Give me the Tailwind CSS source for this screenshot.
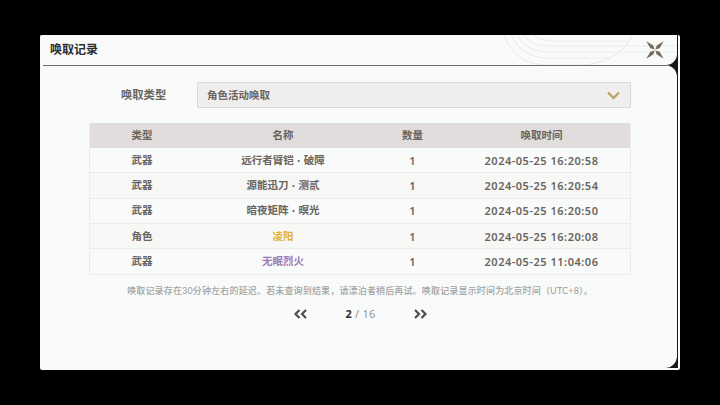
<!doctype html>
<html lang="zh-CN">

<head>
    <meta charset="utf-8">
    <meta name="viewport" content="width=device-width, initial-scale=1.0">
    <title>唤取记录</title>
    <script src="https://cdn.jsdelivr.net/npm/@tailwindcss/browser@4"></script>
</head>

<body class="bg-black w-[720px] h-[405px] overflow-hidden pt-[35px] pl-10 font-['Lato','Noto_Sans_CJK_SC',sans-serif] text-[#69645e]">
    <div class="w-[640px] h-[335px] bg-[#f9fbfa] rounded-[2px] pr-[2px] pb-[2px] overflow-hidden">
        <div class="flex flex-col h-full bg-[#15191b] pr-[1px]">

            <!-- Title bar -->
            <header class="relative h-[30px] shrink-0 bg-[#f9fbfa] rounded-br-[11px] flex items-center justify-between pl-[10px] pr-[13px] overflow-hidden">
                <svg class="absolute right-0 top-0" width="180" height="30" viewBox="0 0 180 30" fill="none" stroke="#ebedec" stroke-width="1.2">
                    <path d="M7 0C14 18 28 30 48 30H80C108 30 128 18 135 0" />
                    <path d="M14 0C21 14 32 23 50 23H112" />
                    <path d="M20 0C27 11 36 17 52 17H180" />
                    <path d="M27 0C33 8 40 11 54 11H180" />
                    <path d="M36 0C41 4 46 6 56 6H130" />
                </svg>
                <h1 class="relative text-[12px] leading-[30px] font-bold text-[#2c2e30]">唤取记录</h1>
                <button class="relative" aria-label="关闭">
                    <svg class="block" width="18" height="18" viewBox="0 0 18 18" fill="#75695a">
                        <path d="M.3.3L7.200 4.400L8.600 8.600L4.400 7.200z" />
                        <path d="M17.700.3L10.800 4.400L9.400 8.600L13.600 7.200z" />
                        <path d="M.3 17.700L7.200 13.600L8.600 9.400L4.400 10.800z" />
                        <path d="M17.700 17.700L10.800 13.600L9.400 9.400L13.600 10.800z" />
                    </svg>
                </button>
            </header>

            <main class="grow flex flex-col bg-[#f9fbfa] rounded-r-[12px] overflow-hidden">
                <div class="ml-[3px] h-px shrink-0 bg-[#6b6d6d]"></div>

                <!-- Type filter -->
                <div class="flex items-center mt-[16px] pl-[81px]">
                    <span class="w-[76px] text-[11.3px] font-bold">唤取类型</span>
                    <div class="w-[434px] h-[26px] bg-[#f0eeed] border border-[#dad7d5] rounded-[1px] flex items-center justify-between pl-[9px] pr-[10px]">
                        <span class="pt-[2px] text-[10.5px] font-bold">角色活动唤取</span>
                        <svg width="13" height="9" viewBox="0 0 13 9" fill="none" stroke="#bea467" stroke-width="2.400">
                            <path d="M1 1.500L6.500 7L12 1.500" />
                        </svg>
                    </div>
                </div>

                <table class="ml-[49px] mt-[15px] w-[542px] table-fixed border-separate border-spacing-0 rounded-[2px] overflow-hidden border-x border-b border-[#ebebea] text-center text-[10.5px] leading-[15px]">
                    <colgroup>
                        <col class="w-[104px]">
                        <col class="w-[178px]">
                        <col class="w-[81px]">
                        <col class="w-[177px]">
                    </colgroup>
                    <thead class="bg-[#e0dddc]">
                        <tr class="h-[25px]">
                            <th class="p-0 font-bold">类型</th>
                            <th class="p-0 font-bold">名称</th>
                            <th class="p-0 font-bold">数量</th>
                            <th class="p-0 font-bold">唤取时间</th>
                        </tr>
                    </thead>
                    <tbody id="records" class="font-bold"></tbody>
                </table>

                <p class="mt-[9px] text-center text-[9px] leading-[14px] tracking-[0.16px] font-medium text-[#a3a2a1] pl-[3px]">唤取记录存在30分钟左右的延迟。若未查询到结果，请漂泊者稍后再试。唤取记录显示时间为北京时间（UTC+8）。</p>

                <!-- Pagination -->
                <nav class="flex items-center mt-[8px] pl-[254px] h-4">
                    <svg width="13" height="10" viewBox="0 0 13 10" fill="none" stroke="#504c49" stroke-width="2.200">
                        <path d="M5.500 1L1.500 5L5.500 9M12 1L8 5L12 9" />
                    </svg>
                    <div class="w-[107px] text-center text-[11px] font-['Noto_Sans'] tracking-[0.2px] text-[#969492]"><b class="text-[#333]">2</b> / 16</div>
                    <svg width="13" height="10" viewBox="0 0 13 10" fill="none" stroke="#504c49" stroke-width="2.200">
                        <path d="M1 1L5 5L1 9M7.500 1L11.500 5L7.500 9" />
                    </svg>
                </nav>
            </main>
        </div>
    </div>

    <script>
        const records = [
            { type: '武器', name: '远行者臂铠 · 破障', count: 1, time: '2024-05-25 16:20:58' },
            { type: '武器', name: '源能迅刀 · 测贰', count: 1, time: '2024-05-25 16:20:54' },
            { type: '武器', name: '暗夜矩阵 · 暝光', count: 1, time: '2024-05-25 16:20:50' },
            { type: '角色', name: '凌阳', count: 1, time: '2024-05-25 16:20:08', color: 'text-[#e2b02e]' },
            { type: '武器', name: '无眠烈火', count: 1, time: '2024-05-25 11:04:06', color: 'text-[#9f7ab3]' }
        ];

        // Fill the table body
        document.getElementById('records').innerHTML = records.map((r) => `
            <tr class="group h-[25.3px] even:bg-[#f7f7f6]">
                <td class="p-0 border-b border-[#ebebea] group-last:border-b-0">${r.type}</td>
                <td class="p-0 border-b border-[#ebebea] group-last:border-b-0 [word-spacing:1px] ${r.color || ''}">${r.name}</td>
                <td class="p-0 border-b border-[#ebebea] group-last:border-b-0 font-['Noto_Sans'] text-[11px] font-semibold">${r.count}</td>
                <td class="p-0 border-b border-[#ebebea] group-last:border-b-0 font-['Noto_Sans'] text-[11px] font-semibold tracking-[0.52px]">${r.time}</td>
            </tr>`).join('');
    </script>
</body>

</html>
